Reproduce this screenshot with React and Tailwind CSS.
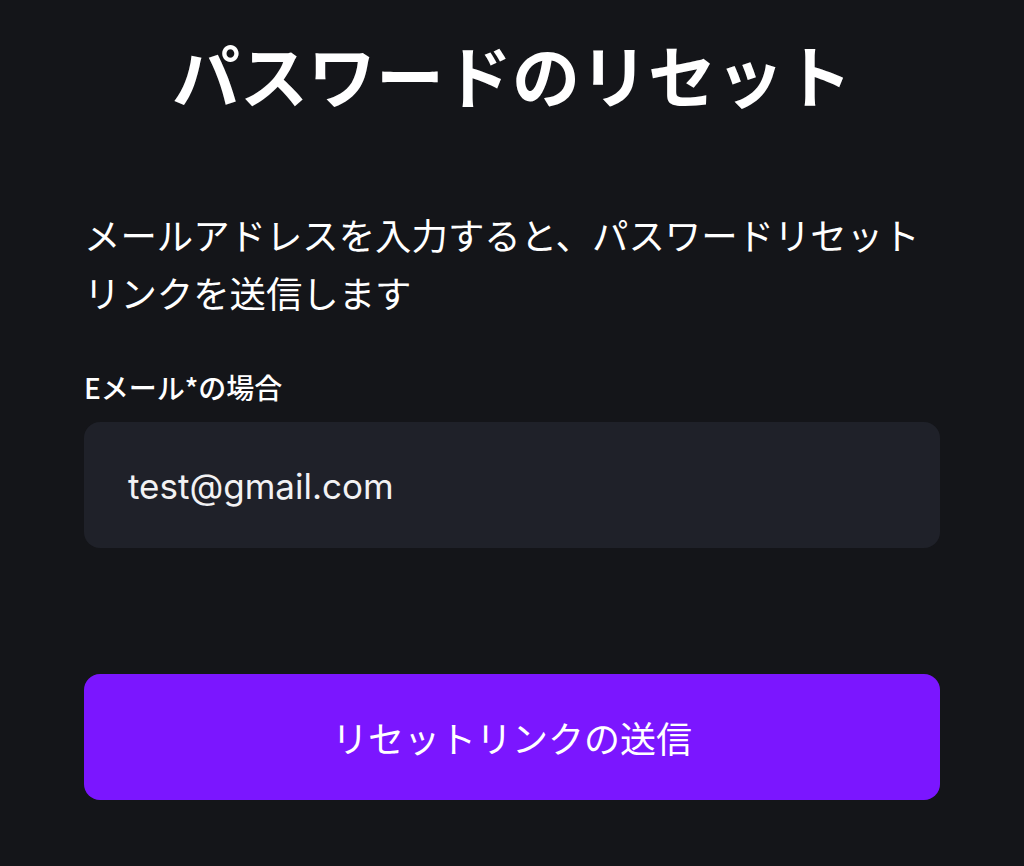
import React from 'react';

const jp = { fontFamily: '"Noto Sans CJK JP", "Noto Sans", sans-serif' };

export default function App() {
  return (
    <div className="min-h-[866px] bg-[#141519] text-white px-[84px] pt-[27px]" style={jp}>
      <h1 className="text-center text-[68px] font-bold leading-[94px]">パスワードのリセット</h1>

      <p className="mt-[84px] text-[36.4px] leading-[58px] font-normal">
        メールアドレスを入力すると、パスワードリセットリンクを送信します
      </p>

      <label className="block mt-[46px] text-[28px] leading-[40px] font-medium">Eメール*の場合</label>

      <div className="mt-[15px] h-[126px] rounded-[16px] bg-[#1f2129] flex items-center px-[44px]">
        <span
          className="text-[35px] text-[#f2f2f4] pt-[3px]"
          style={{ fontFamily: 'Inter, "Noto Sans", sans-serif' }}
        >
          test@gmail.com
        </span>
      </div>

      <button className="mt-[126px] w-full h-[126px] rounded-[16px] bg-[#7b16ff] text-[36px] font-normal text-white">
        リセットリンクの送信
      </button>
    </div>
  );
}
